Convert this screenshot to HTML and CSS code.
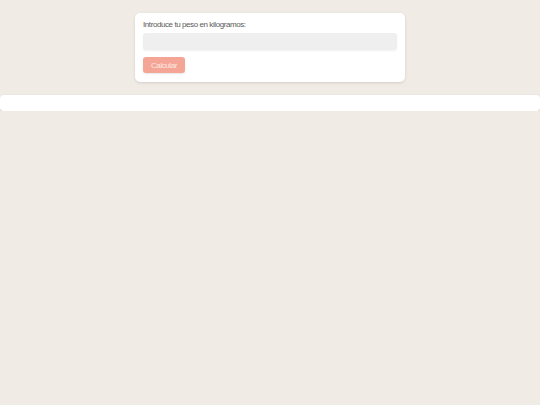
FILE: index.html
```html
<!DOCTYPE html>
<html lang="es">
<head>
<meta charset="utf-8">
<link rel="stylesheet" href="styles.css">
</head>
<body>
<div class="card">
  <label class="label" for="peso">Introduce tu peso en kilogramos:</label>
  <input class="input" id="peso" type="text">
  <button class="btn">Calcular</button>
</div>
<div class="result"></div>
</body>
</html>
```
FILE: styles.css
```css
html, body {
  margin: 0;
  padding: 0;
  background: #f0ebe4;
  font-family: "Liberation Sans", Arial, sans-serif;
}
body {
  padding-top: 13px;
}
.card {
  width: 270px;
  box-sizing: border-box;
  margin: 0 auto 13px;
  background: #fff;
  border-radius: 5px;
  padding: 7px 8px 9px;
  box-shadow: 0 1px 3px rgba(0,0,0,0.12);
  display: flex;
  flex-direction: column;
  align-items: flex-start;
}
.label {
  font-size: 8px;
  letter-spacing: -0.42px;
  color: #5a5a5a;
  line-height: 9px;
  margin-bottom: 4px;
}
.input {
  width: 100%;
  box-sizing: border-box;
  height: 17px;
  border: none;
  background: #efefef;
  border-radius: 3px;
  box-shadow: 0 1px 2px rgba(0,0,0,0.06);
  margin: 0 0 7px;
  padding: 0;
}
.btn {
  width: 42px;
  height: 16px;
  border: none;
  border-radius: 3px;
  background: #f4a595;
  color: #fde9e4;
  font-family: "Liberation Sans", Arial, sans-serif;
  font-size: 8px;
  letter-spacing: -0.42px;
  padding: 0;
  box-shadow: 0 1px 2px rgba(0,0,0,0.1);
}
.result {
  height: 16px;
  background: #fff;
  border-radius: 4px;
  box-shadow: 0 1px 3px rgba(0,0,0,0.12);
}
```
